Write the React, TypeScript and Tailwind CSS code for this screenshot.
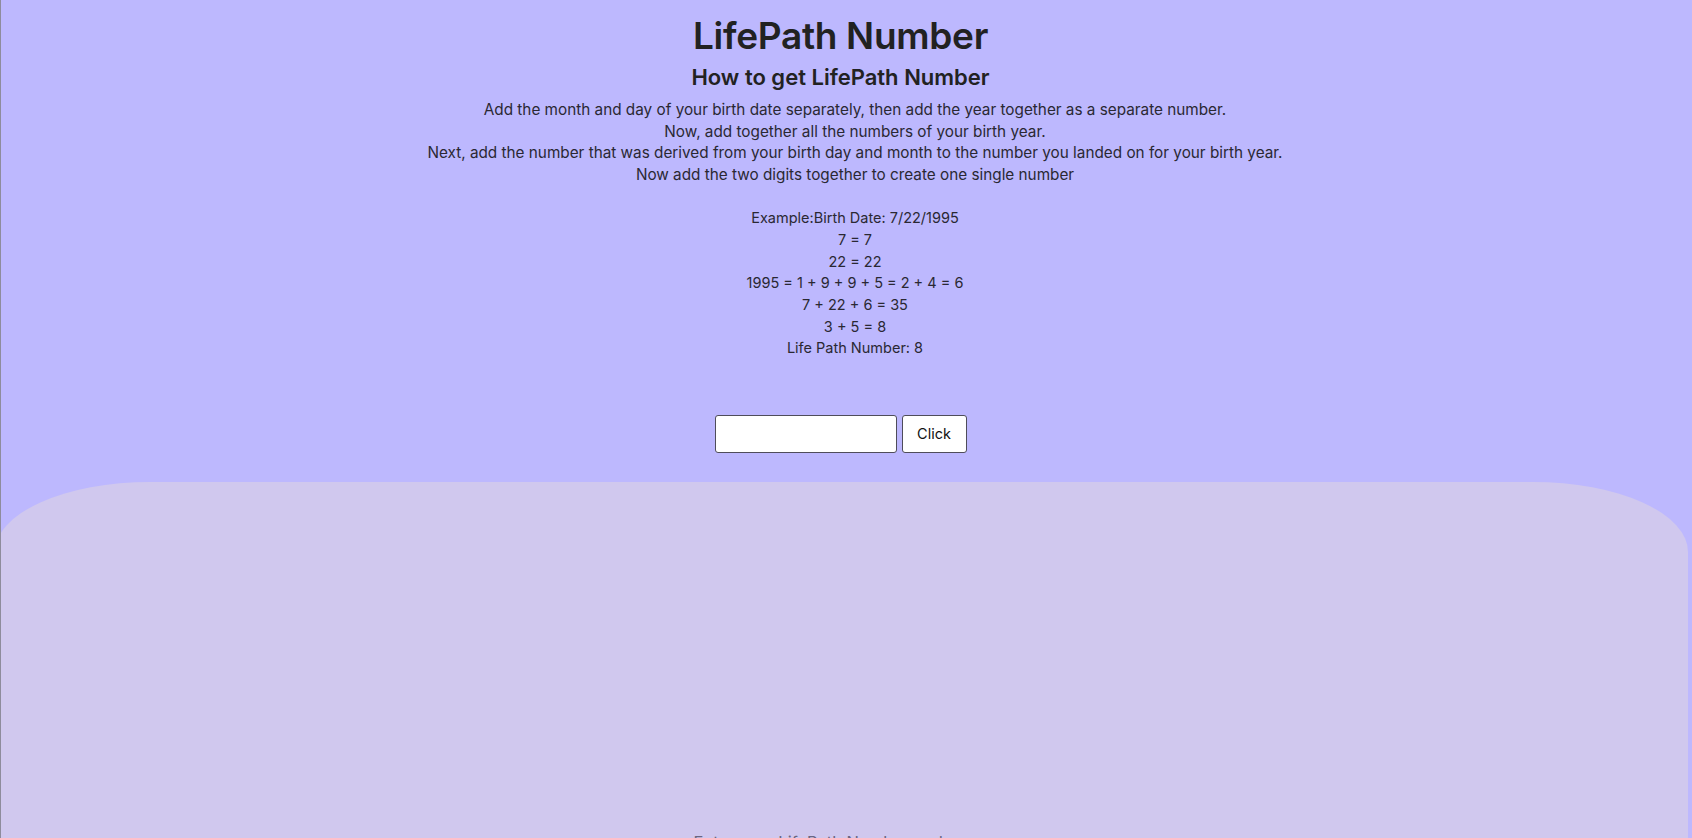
import { useState } from 'react'

const font = { fontFamily: 'Inter, "Open Sans", sans-serif' }

const steps = [
  'Add the month and day of your birth date separately, then add the year together as a separate number.',
  'Now, add together all the numbers of your birth year.',
  'Next, add the number that was derived from your birth day and month to the number you landed on for your birth year.',
  'Now add the two digits together to create one single number',
]

const example = [
  'Example:Birth Date: 7/22/1995',
  '7 = 7',
  '22 = 22',
  '1995 = 1 + 9 + 9 + 5 = 2 + 4 = 6',
  '7 + 22 + 6 = 35',
  '3 + 5 = 8',
  'Life Path Number: 8',
]

export default function App() {
  const [value, setValue] = useState('')

  return (
    <div
      className="min-h-screen bg-[#bdb8fe] border-l border-[#8e8c9c] text-[#222] overflow-hidden"
      style={font}
    >
      {/* Header + explanation */}
      <div className="w-[1679px] flex flex-col items-center pt-[13px]">
        <h1 className="text-[37px] leading-[46px] font-semibold tracking-[-0.3px]">LifePath Number</h1>
        <h2 className="mt-[6px] text-[22px] leading-[25px] font-semibold">How to get LifePath Number</h2>

        <div className="mt-[9px] pl-[29px] text-center leading-[21.67px] text-[#2a2833]">
          {steps.map((s) => (
            <p key={s} className="text-[15.3px]">{s}</p>
          ))}
          <p>&nbsp;</p>
          {example.map((s) => (
            <p key={s} className="text-[14.5px]">{s}</p>
          ))}
        </div>

        {/* Input row */}
        <div className="mt-[56px] flex items-center gap-[5px]">
          <input
            value={value}
            onChange={(e) => setValue(e.target.value)}
            className="w-[182px] h-[38px] px-2 bg-white border border-[#4f4d5a] rounded-[3px] outline-none text-[14px]"
          />
          <button className="w-[65px] h-[38px] bg-white border border-[#4f4d5a] rounded-[3px] text-[14.5px] text-[#111]">
            Click
          </button>
        </div>
      </div>

      {/* Lower panel */}
      <div className="mt-[29px] -ml-[6px] w-[1693px] min-h-[600px] bg-[#d0c8ee] rounded-tl-[155px_70px] rounded-tr-[155px_70px] pt-[348px]">
        <p className="w-[1679px] text-center text-[16.5px] leading-[24px] text-[#6a6580]">
          Enter your LifePath Number and see
        </p>
      </div>
    </div>
  )
}
